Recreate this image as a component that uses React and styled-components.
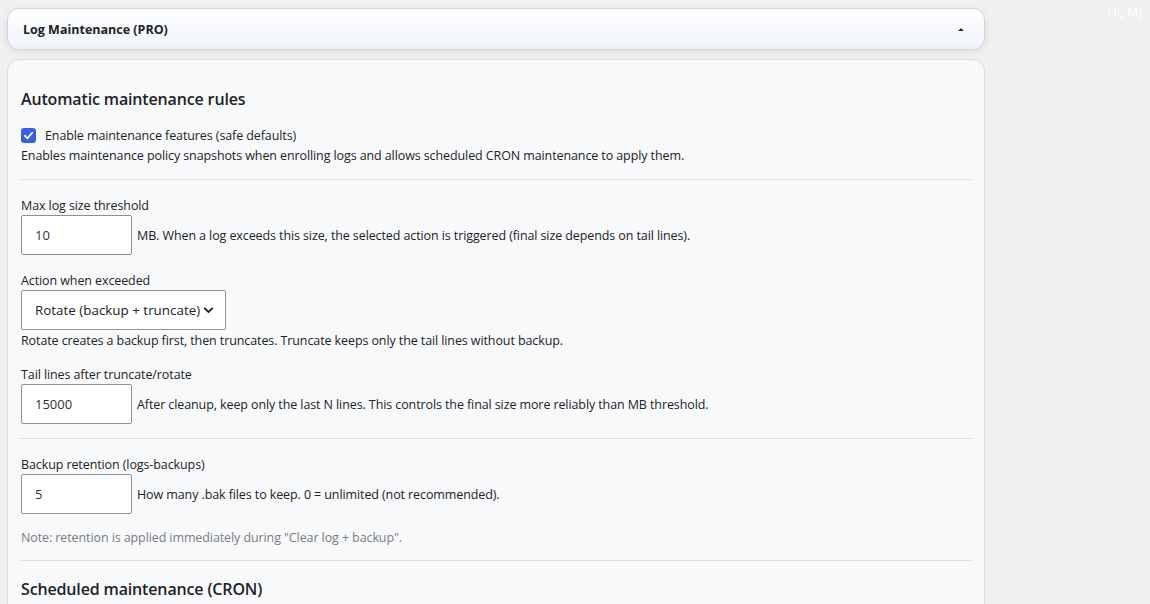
import React from "react";
import styled, { createGlobalStyle } from "styled-components";

const Global = createGlobalStyle`
  html, body { margin: 0; padding: 0; }
  body {
    background: #f0f0f0;
    font-family: "Open Sans", "Noto Sans", sans-serif;
    color: #1d2327;
    font-size: 12.5px;
    letter-spacing: -0.1px;
  }
`;

const Page = styled.div`
  position: relative;
  width: 1150px;
  height: 604px;
  overflow: hidden;
  padding: 8px 0 0 7px;
  box-sizing: border-box;
`;

const Column = styled.div`
  width: 978px;
  display: flex;
  flex-direction: column;
  gap: 9px;
`;

const Greeting = styled.div`
  position: absolute;
  top: 3px;
  right: 8px;
  color: #ffffff;
  font-size: 13px;
  letter-spacing: 0;
`;

const Header = styled.div`
  height: 42px;
  box-sizing: border-box;
  border: 1px solid #ccd5e4;
  border-radius: 12px;
  background: linear-gradient(180deg, #ffffff 0%, #eff3f9 100%);
  box-shadow: 0 2px 8px rgba(0, 0, 0, 0.08);
  display: flex;
  align-items: center;
  justify-content: space-between;
  padding: 0 20px 0 15px;
`;

const Title = styled.h2`
  margin: 0;
  font-size: 12.5px;
  font-weight: 700;
  letter-spacing: 0;
  color: #1d2327;
`;

const Caret = styled.span`
  width: 0;
  height: 0;
  border-left: 3px solid transparent;
  border-right: 3px solid transparent;
  border-bottom: 3px solid #2c3338;
`;

const Card = styled.div`
  border: 1px solid #dcdcde;
  border-radius: 12px;
  background: #f8f9fb;
  padding: 28px 13px 20px 13px;
  min-height: 600px;
  box-sizing: border-box;
`;

const SectionTitle = styled.h3`
  margin: 0 0 ${(p) => p.$after || 0}px;
  font-size: 16px;
  line-height: 22px;
  font-weight: 600;
  letter-spacing: -0.15px;
  color: #1d2327;
`;

const CheckRow = styled.label`
  display: flex;
  align-items: center;
  gap: 9px;
  height: 18px;
`;

const CheckBox = styled.span`
  width: 15px;
  height: 15px;
  border-radius: 3px;
  background: #3b5ee6;
  display: flex;
  align-items: center;
  justify-content: center;
`;

const Text = styled.p`
  margin: ${(p) => p.$top || 0}px 0 0;
  line-height: 18px;
  color: ${(p) => (p.$muted ? "#787c82" : "#1d2327")};
`;

const Divider = styled.hr`
  border: 0;
  border-top: 1px solid #dcdcde;
  margin: ${(p) => p.$top}px 0 ${(p) => p.$bottom}px;
`;

const Field = styled.div`
  margin-top: ${(p) => p.$top || 0}px;
`;

const Label = styled.div`
  line-height: 18px;
`;

const Row = styled.div`
  display: flex;
  align-items: center;
  gap: 5px;
`;

const Input = styled.div`
  width: 111px;
  height: 40px;
  box-sizing: border-box;
  border: 1px solid #8c8f94;
  border-radius: 2px;
  background: #fff;
  padding: 0 13px;
  display: flex;
  align-items: center;
  font-size: 13px;
  letter-spacing: 0;
  white-space: nowrap;
  color: #2c3338;
`;

const Select = styled(Input)`
  width: 205px;
  gap: 3px;
  padding-right: 0;
  font-size: 13.4px;
  color: #1d2327;
`;

function Check() {
  return (
    <svg width="11" height="11" viewBox="0 0 12 12">
      <path d="M2 6.3 L4.8 9 L10 3" fill="none" stroke="#fff" strokeWidth="2" strokeLinecap="round" strokeLinejoin="round" />
    </svg>
  );
}

function Chevron() {
  return (
    <svg width="11" height="8" viewBox="0 0 11 8">
      <path d="M1.2 1.8 L5.5 6 L9.8 1.8" fill="none" stroke="#1d2327" strokeWidth="1.8" />
    </svg>
  );
}

export default function App() {
  return (
    <>
      <Global />
      <Page>
        <Greeting>Hi, MJ</Greeting>
        <Column>
          <Header>
            <Title>Log Maintenance (PRO)</Title>
            <Caret />
          </Header>
          <Card>
            <SectionTitle $after={16}>Automatic maintenance rules</SectionTitle>
            <CheckRow>
              <CheckBox>
                <Check />
              </CheckBox>
              Enable maintenance features (safe defaults)
            </CheckRow>
            <Text $top={3}>
              Enables maintenance policy snapshots when enrolling logs and allows scheduled CRON maintenance to apply them.
            </Text>
            <Divider $top={14} $bottom={17} />

            <Field>
              <Label>Max log size threshold</Label>
              <Row>
                <Input>10</Input>
                MB. When a log exceeds this size, the selected action is triggered (final size depends on tail lines).
              </Row>
            </Field>

            <Field $top={17}>
              <Label>Action when exceeded</Label>
              <Select>
                Rotate (backup + truncate)
                <Chevron />
              </Select>
              <Text $top={2}>Rotate creates a backup first, then truncates. Truncate keeps only the tail lines without backup.</Text>
            </Field>

            <Field $top={16}>
              <Label>Tail lines after truncate/rotate</Label>
              <Row>
                <Input>15000</Input>
                After cleanup, keep only the last N lines. This controls the final size more reliably than MB threshold.
              </Row>
            </Field>

            <Divider $top={14} $bottom={17} />

            <Field>
              <Label>Backup retention (logs-backups)</Label>
              <Row>
                <Input>5</Input>
                How many .bak files to keep. 0 = unlimited (not recommended).
              </Row>
            </Field>
            <Text $muted $top={15}>
              Note: retention is applied immediately during "Clear log + backup".
            </Text>
            <Divider $top={13} $bottom={17} />
            <SectionTitle>Scheduled maintenance (CRON)</SectionTitle>
          </Card>
        </Column>
      </Page>
    </>
  );
}
